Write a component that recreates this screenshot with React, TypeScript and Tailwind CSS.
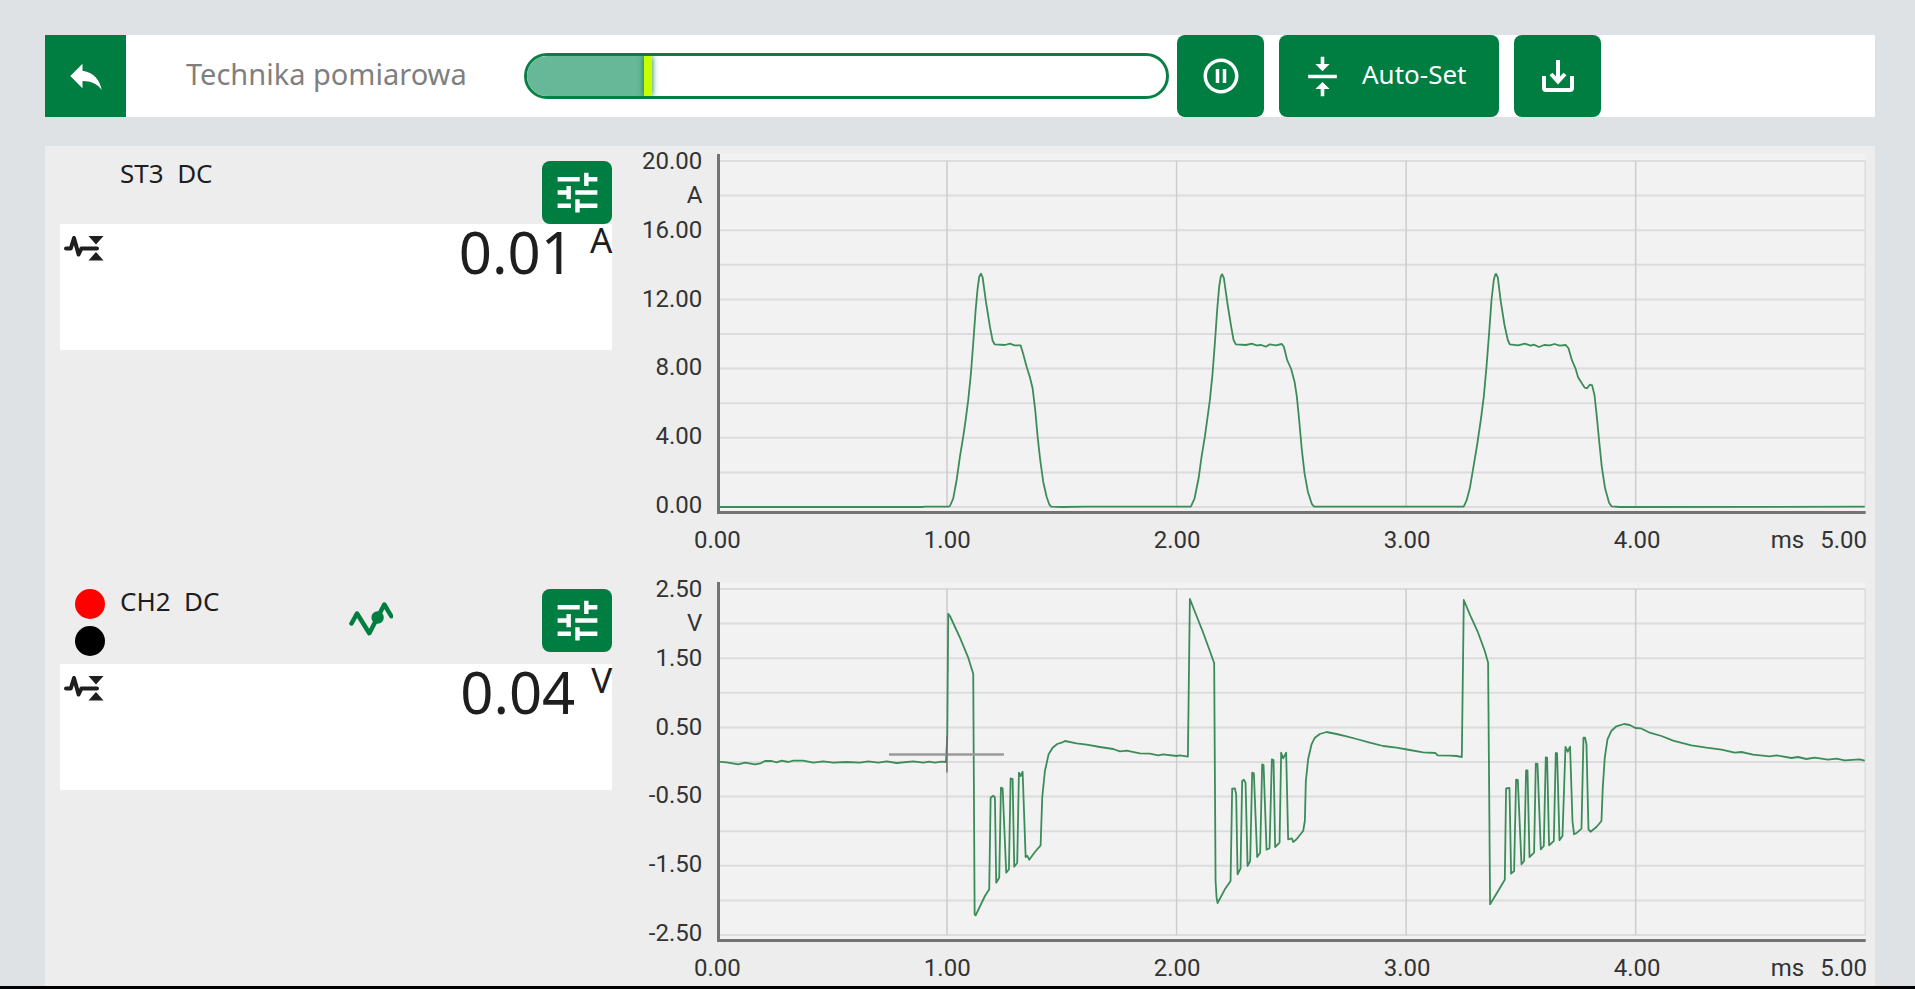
import { ReactNode } from "react";
import { MdPauseCircleOutline, MdReply, MdTune, MdVerticalAlignCenter } from "react-icons/md";

type Channel = {
    id: string;
    name: string;
    coupling: string;
    value: string;
    unit: string;
    probes: boolean;
    ticks: string[];
    trace: string;
    trigger?: { x: number; y: number };
};

const TIME_TICKS = ["0.00", "1.00", "2.00", "3.00", "4.00"];

// Plot area in viewBox units
const PLOT = { width: 1150, height: 360, top: 7, stepY: 34.6, stepX: 229.6 };

const CURRENT_TRACE = `
1,353 206,353 207,352.6 232,352.6 233,352 236.3,344.3 239.7,326 243,302.7 246.3,282.7 248.7,266 251.3,246 254,219.3
256.3,189.3 258.7,156 260.7,134.3 262.3,122.7 264,119.7 265.7,123.3 269,147.7 273,172.7 275.7,186.7 277.7,190.3
288,191 293,189.7 297.7,191.3 303.7,191.3 306.3,200 309.7,212.7 313,223.3 315.7,234.3 318.3,256 320.7,282.7
323.3,306 326.3,327.7 329.7,342.7 332.3,350.3 334.3,352.7 346,353 368,352.7 473.5,352.7
474.3,352 477.7,344.3 481.7,324.3 484.7,302.7 488,282.7 490.3,266 493,246 495.7,219.3 498,189.3 500.3,156
502.3,132.7 504,122 505.3,120.3 507,124 510.3,147.7 514.3,172.7 516.7,186 519,190.3 529,191 535,189.7
539.7,191.3 544.3,191 549,192.7 553,190.3 559,191.3 565,190 567,192.7 570.3,206 574.3,215 577.7,227.7
580,242.7 582.3,266 585,296 587.7,319.3 591,337.7 595,350 597.3,352.7 746.5,352.7
747,352.3 749.7,346.7 753,334.3 756.7,312.7 760.3,291 764,266 767,242.7 769.7,212.7 772.3,179.3 774.7,146
777,126 778.3,121 779.3,120 781,123.3 784,147.7 787.7,171 791,186 793,190.3 801.3,191.3 808,189.7 814,191.7
817,190.7 822.3,193 827.3,191 833,191.3 837.7,190 843,191.7 849,191 851.7,194.3 855.3,206.7 858.7,214.3
861.3,223.3 865.7,230.3 868,233.7 870.3,234.3 873,230.7 875.3,231.3 877.7,241 879.7,259.3 882.3,286
885,312.7 888.3,334.3 892.3,348.7 894.7,352.3 903,353 1148,352.7`;

const VOLTAGE_TRACE = `
1,179.7 9.7,180.3 21.3,182.3 28,180.7 38,182.3 43.7,181.3 48,179 54.7,179 59.7,180.3 64.7,178.7 71.3,180
76.3,178.7 86.3,178.7 96.3,180.7 106.3,179.3 116.3,180.7 129.7,180 143,180.7 151.3,179.3 161.3,180.7
169.7,179.3 179.7,181 196.3,179.3 206.3,180.7 212,179.7 218,180.7 224.7,179.7 229,180
230.3,155.7 231.3,31.7 233,34 243,55.7 251.3,75.7 256.3,91.7 257.7,332.3 258.7,333.3 268,314 272.3,307.3
273.7,215.7 276.3,213.7 278,215.7 279.3,300.7 282.3,295.7 284,205.7 285.7,206.3 289.3,290.7 292,287.3
293.7,196.3 295.7,197 297.3,284.7 300.3,280.7 302,190.7 303.7,194 305.7,189.7 308.7,275 310.3,273.7
312.3,277.7 318,270 323.7,263.3 325.3,215.7 328,189 331.7,172.3 335.7,165.7 340.3,162 344.7,160.7 348,159
359.7,161.3 369.7,162.7 383,165 396.3,167 403,169.3 409.7,168.7 423,171.3 433,171.7 441.3,173.3
446.3,172.3 459.7,174 463,173.4 471,174.6
473,17 479.7,34 486.3,50.7 493,69 497.3,81.3 498.7,299 499.7,315.7 500.7,321 508,307.3 513.7,299
515.3,206.7 518,206.3 519.3,212.3 520.7,292.3 523.7,286.3 525.3,199 527,197.7 528.7,200.7 530.7,284
533.3,279 535.3,190.7 537,191.3 540.3,275 543.3,270.7 545.3,182.3 546.7,183 549.7,267.7 552.7,266.3
555,177.3 556.7,178 558.3,265 562.7,260.7 564.3,170.7 566.3,176.3 569.3,170.7 571.3,257.3 575,256.3
576.3,260 579.7,257.3 583,253 586.3,249 588,239 589,199 591.3,177.3 594.7,162.3 598,155.7 603,152
609.7,150 619.7,152 629.7,154.3 639.7,157 653,160.7 666.3,164 679.7,165.7 693,168 706.3,170.3 718.7,171
720.7,173.3 733,173.7 739.7,174 745,175
747,18 753,32.3 761.3,50.7 768,69 771.3,80.7 773.3,322.3 781.3,309 788,297.7 789.3,206.3 792.7,206
794.3,291.7 797.3,289 799.3,197.7 801,198 804.7,282.3 807.3,279 809.3,188.3 810.7,188.3 812.7,275
817.3,270.7 819,181.7 820.7,182 824,267.3 827,264 829,175.3 830.3,175.7 832.3,263.3 837,259 839,171
840.3,171.3 842.7,258.3 845.7,254 848.7,165 851,169.7 853.3,164.7 855.7,239 857.3,252.3 860.3,250.7
864.7,246.7 866.7,155.7 868.3,155.7 869.7,162.3 871.7,247.3 873.7,249.7 879.7,245 884.7,239 886,205.7
888,175.7 890.7,157.3 894.7,148.7 899.7,144.3 907.3,142 913,143 918.7,146 924,146.3 933,150.7 944.7,154
956.3,158.7 974.7,163.3 989.7,165.7 1004.7,167.7 1018,170.7 1024.7,170 1036.3,172.7 1053,174.3
1059.7,173.3 1074.7,176 1081.3,175 1089.7,177 1098,175.7 1111.3,177.7 1119.7,176.7 1128,178.3
1143,177.3 1148,178.7`;

const CHANNELS: Channel[] = [
    {
        id: "st3",
        name: "ST3",
        coupling: "DC",
        value: "0.01",
        unit: "A",
        probes: false,
        ticks: ["20.00", "A", "16.00", "", "12.00", "", "8.00", "", "4.00", "", "0.00"],
        trace: CURRENT_TRACE,
    },
    {
        id: "ch2",
        name: "CH2",
        coupling: "DC",
        value: "0.04",
        unit: "V",
        probes: true,
        ticks: ["2.50", "V", "1.50", "", "0.50", "", "-0.50", "", "-1.50", "", "-2.50"],
        trace: VOLTAGE_TRACE,
        trigger: { x: 230, y: 172.5 },
    },
];

function ToolButton({ label, children, className = "w-[87px] justify-center" }: { label?: string; children: ReactNode; className?: string }) {
    return (
        <button
            type="button"
            aria-label={label}
            className={`flex shrink-0 items-center rounded-lg bg-[#007d40] text-white ${className}`}
        >
            {children}
        </button>
    );
}

function DownloadIcon() {
    return (
        <svg width="32" height="32" viewBox="0 0 32 32" fill="none" stroke="currentColor" strokeWidth="4" aria-hidden="true">
            <path d="M2 16v12a2 2 0 0 0 2 2h24a2 2 0 0 0 2-2V16" />
            <path d="M16 0v21M9 14l7 7.500 7-7.500" />
        </svg>
    );
}

function SignalRangeIcon() {
    return (
        <svg width="40" height="25" viewBox="0 0 40 25" className="text-[#1e1e1e]" aria-hidden="true">
            <path
                d="M2 12.500h4.800L10 2l4.600 16.500 2.800-6H33"
                fill="none"
                stroke="currentColor"
                strokeWidth="4"
                strokeLinecap="round"
                strokeLinejoin="round"
            />
            <path d="M24.500 0h15L32 8.500zM24.500 24.500h15L32 16z" fill="currentColor" />
        </svg>
    );
}

function TriggerIcon() {
    return (
        <svg width="44" height="34" viewBox="0 0 44 34" className="text-[#007d40]" aria-label="Trigger" role="img">
            <path
                d="M2.500 21.500L8 11.500l12.300 19.700L35.300 2.500l7 11.700"
                fill="none"
                stroke="currentColor"
                strokeWidth="4.500"
                strokeLinecap="round"
                strokeLinejoin="round"
            />
            <circle cx="28.600" cy="15.500" r="6.200" fill="currentColor" />
        </svg>
    );
}

function Header() {
    const progress = 18.3;

    return (
        <header className="flex h-[82px] bg-white">
            <button type="button" aria-label="Wstecz" className="flex w-[81px] shrink-0 items-center justify-center bg-[#007d40] text-white">
                <MdReply size={42} />
            </button>
            <h1 className="flex w-[398px] shrink-0 items-center pb-1 pl-[60px] text-[29px] text-[#7f7f7f]">Technika pomiarowa</h1>
            <div
                role="progressbar"
                aria-label="Postęp pomiaru"
                aria-valuenow={progress}
                className="mr-2 flex h-[46px] flex-1 self-center overflow-hidden rounded-full border-3 border-[#0a7f45] bg-white"
            >
                <div className="bg-[#67b898]" style={{ width: `${progress}%` }} />
                <div className="w-2 bg-[#c8ff00] shadow-[0_0_6px_#007d40]" />
            </div>
            <div className="mr-[274px] flex gap-[15px]">
                <ToolButton label="Pauza">
                    <MdPauseCircleOutline size={42} />
                </ToolButton>
                <ToolButton className="w-[220px] gap-[18px] pl-[22px]">
                    <MdVerticalAlignCenter size={43} />
                    <span className="pb-1 text-[26px]">Auto-Set</span>
                </ToolButton>
                <ToolButton label="Zapisz">
                    <DownloadIcon />
                </ToolButton>
            </div>
        </header>
    );
}

function Readout({ channel }: { channel: Channel }) {
    return (
        <div className="w-[31%] shrink-0 pt-[15px] pl-[15px]">
            <div className={channel.probes ? "flex h-[75px] items-start" : "flex items-start"}>
                <div className="w-[60px] shrink-0 space-y-[7px] pl-[15px]">
                    {channel.probes && (
                        <>
                            <div className="size-[30px] rounded-full bg-[#ff0000]" />
                            <div className="size-[30px] rounded-full bg-black" />
                        </>
                    )}
                </div>
                <h2 className="w-[229px] text-[26px] leading-6 whitespace-pre text-[#1e1e1e]">
                    {channel.name}  {channel.coupling}
                </h2>
                {channel.probes && <div className="pt-[13px]"><TriggerIcon /></div>}
                <button
                    type="button"
                    aria-label={`Ustawienia ${channel.name}`}
                    className="ml-auto flex h-[63px] w-[70px] items-center justify-center rounded-lg bg-[#007d40] text-white"
                >
                    <MdTune size={53} />
                </button>
            </div>
            <div className="flex h-[126px] items-start bg-white text-[#1e1e1e]">
                <div className="pt-3 pl-1">
                    <SignalRangeIcon />
                </div>
                <div className="ml-auto flex gap-4">
                    <span className="text-[58px] leading-[56px]">{channel.value}</span>
                    <span className="text-[35px] leading-8">{channel.unit}</span>
                </div>
            </div>
        </div>
    );
}

function Plot({ channel }: { channel: Channel }) {
    const { width, height, top, stepX, stepY } = PLOT;
    const bottom = top + 10 * stepY;

    return (
        <svg
            viewBox={`0 0 ${width} ${height}`}
            preserveAspectRatio="none"
            className="block h-[360px] w-full"
            role="img"
            aria-label={`Przebieg ${channel.name}`}
        >
            <rect width={width - 1} height={height} fill="#f2f2f2" />
            {channel.ticks.map((_, i) => (
                <path key={i} d={`M0 ${top + i * stepY}H${width - 1}`} stroke="#dcdcdc" strokeWidth="2" />
            ))}
            {[1, 2, 3, 4, 5].map((i) => (
                <path key={i} d={`M${i * stepX + 0.5} ${top}V${bottom}`} stroke={i === 5 ? "#dcdcdc" : "#cdcdcd"} strokeWidth="1.500" />
            ))}
            <path d={`M1.500 0V${height}M0 ${height - 1.5}H${width - 1}`} stroke="#737373" strokeWidth="3" fill="none" />
            <polyline points={channel.trace} fill="none" stroke="#3c8c5a" strokeWidth="1.800" strokeLinejoin="round" />
            {channel.trigger && (
                <>
                    <path d={`M${channel.trigger.x - 58} ${channel.trigger.y}h115`} stroke="#9a9a9a" strokeWidth="2.500" />
                    <path d={`M${channel.trigger.x} ${channel.trigger.y - 18}v36`} stroke="#6e6e6e" strokeWidth="1.500" />
                </>
            )}
        </svg>
    );
}

function Chart({ channel }: { channel: Channel }) {
    return (
        <div className="flex min-w-0 flex-1 gap-[15px] pr-2 font-['Roboto',sans-serif] text-[24px] leading-6 text-[#333]">
            <div className="mt-[3px] flex h-[368px] w-[90px] shrink-0 flex-col justify-between text-right">
                {channel.ticks.map((tick, i) => (
                    <span key={i} className="h-6">{tick}</span>
                ))}
            </div>
            <div className="min-w-0 flex-1 pt-2">
                <Plot channel={channel} />
                <div className="mt-[14px] grid grid-cols-5">
                    {TIME_TICKS.map((tick, i) => (
                        <div key={tick} className="flex justify-between">
                            <span className="-ml-6 w-12 text-center">{tick}</span>
                            {i === TIME_TICKS.length - 1 && (
                                <span className="flex gap-4">
                                    <span>ms</span>
                                    <span>5.00</span>
                                </span>
                            )}
                        </div>
                    ))}
                </div>
            </div>
        </div>
    );
}

export default function App() {
    return (
        <div className="flex min-h-screen flex-col border-b-3 border-black bg-[#dee2e5] pt-[35px] pr-10 pl-[45px] font-['Noto_Sans',sans-serif]">
            <Header />
            <main className="mt-[29px] flex flex-1 flex-col gap-[22px] bg-[#ededed] pb-1.5">
                {CHANNELS.map((channel) => (
                    <section key={channel.id} className="flex">
                        <Readout channel={channel} />
                        <Chart channel={channel} />
                    </section>
                ))}
            </main>
        </div>
    );
}
